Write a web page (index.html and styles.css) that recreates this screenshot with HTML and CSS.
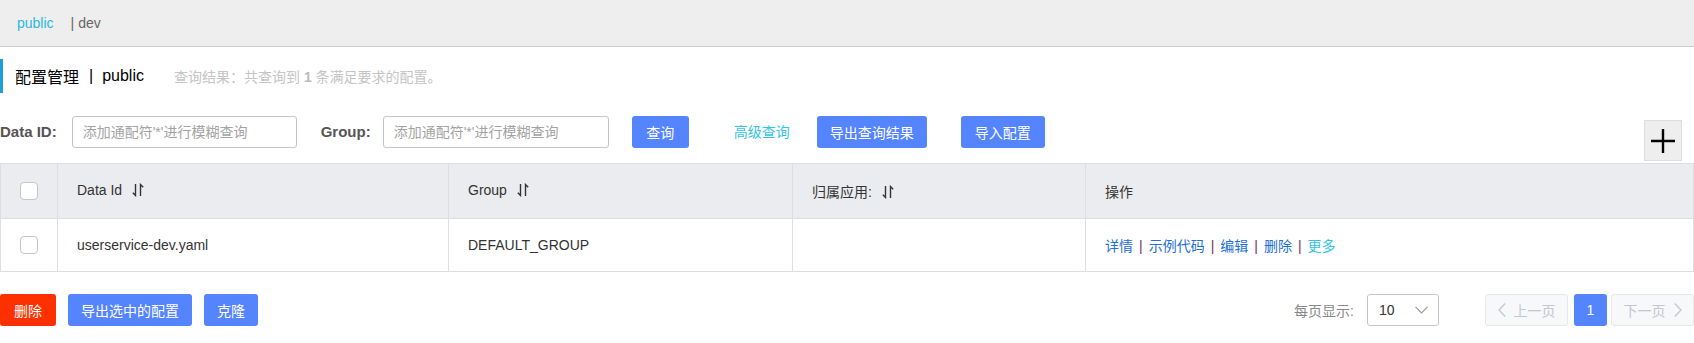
FILE: index.html
```html
<!DOCTYPE html>
<html lang="zh-CN">
<head>
    <meta charset="UTF-8">
    <title>配置管理</title>
    <link rel="stylesheet" href="styles.css">
</head>
<body>
    <div class="topbar">
        <span class="ns-active">public</span>
        <span class="ns-sep">|</span>
        <span class="ns">dev</span>
    </div>

    <div class="title">
        <span class="title-main">配置管理</span>
        <span class="title-sep">|</span>
        <span class="title-ns">public</span>
        <span class="summary">查询结果：共查询到 <b>1</b> 条满足要求的配置。</span>
    </div>

    <div class="toolbar">
        <label class="field-label">Data ID:</label>
        <input class="field-input" type="text" placeholder="添加通配符'*'进行模糊查询">
        <label class="field-label group-label">Group:</label>
        <input class="field-input group-input" type="text" placeholder="添加通配符'*'进行模糊查询">
        <button class="btn btn-primary btn-search">查询</button>
        <a class="adv-link">高级查询</a>
        <button class="btn btn-primary btn-export">导出查询结果</button>
        <button class="btn btn-primary">导入配置</button>
        <button class="add-btn">
            <svg width="24" height="24" viewBox="0 0 24 24"><path d="M0 12 H24 M12 0 V24" stroke="#000" stroke-width="2.4" fill="none"/></svg>
        </button>
    </div>

    <table class="grid">
        <colgroup>
            <col style="width:57px">
            <col style="width:391px">
            <col style="width:344px">
            <col style="width:293px">
            <col>
        </colgroup>
        <thead>
            <tr>
                <th class="check-cell"><span class="checkbox"></span></th>
                <th>Data Id <span class="sort"><svg width="12" height="14" viewBox="0 0 12 14"><path d="M3.5 1 V12.5 L0.8 9.8 M8.5 13 V1.5 L11.2 4.2" stroke="#333" stroke-width="1.4" fill="none"/></svg></span></th>
                <th>Group <span class="sort"><svg width="12" height="14" viewBox="0 0 12 14"><path d="M3.5 1 V12.5 L0.8 9.8 M8.5 13 V1.5 L11.2 4.2" stroke="#333" stroke-width="1.4" fill="none"/></svg></span></th>
                <th>归属应用: <span class="sort"><svg width="12" height="14" viewBox="0 0 12 14"><path d="M3.5 1 V12.5 L0.8 9.8 M8.5 13 V1.5 L11.2 4.2" stroke="#333" stroke-width="1.4" fill="none"/></svg></span></th>
                <th>操作</th>
            </tr>
        </thead>
        <tbody>
            <tr>
                <td class="check-cell"><span class="checkbox"></span></td>
                <td>userservice-dev.yaml</td>
                <td>DEFAULT_GROUP</td>
                <td></td>
                <td class="ops">
                    <a>详情</a><span class="op-sep">|</span><a>示例代码</a><span class="op-sep">|</span><a>编辑</a><span class="op-sep">|</span><a>删除</a><span class="op-sep">|</span><a class="more">更多</a>
                </td>
            </tr>
        </tbody>
    </table>

    <div class="footer">
        <div class="batch">
            <button class="btn btn-danger">删除</button>
            <button class="btn btn-primary">导出选中的配置</button>
            <button class="btn btn-primary">克隆</button>
        </div>
        <div class="pager">
            <span class="page-size-label">每页显示:</span>
            <div class="select">
                <span>10</span>
                <svg width="13" height="8" viewBox="0 0 13 8"><path d="M0.5 0.8 L6.5 7 L12.5 0.8" stroke="#999" stroke-width="1.2" fill="none"/></svg>
            </div>
            <button class="page-btn prev">
                <svg width="8" height="14" viewBox="0 0 8 14"><path d="M7.2 0.5 L1 7 L7.2 13.5" stroke="#c4c6cf" stroke-width="1.3" fill="none"/></svg>
                上一页
            </button>
            <button class="page-btn current">1</button>
            <button class="page-btn next">
                下一页
                <svg width="8" height="14" viewBox="0 0 8 14"><path d="M0.8 0.5 L7 7 L0.8 13.5" stroke="#c4c6cf" stroke-width="1.3" fill="none"/></svg>
            </button>
        </div>
    </div>
</body>
</html>
```

FILE: styles.css
```css
*{
    margin: 0;
    padding: 0;
    box-sizing: border-box;
}
html, body{
    background-color: #fff;
    font-family: "Liberation Sans", "Noto Sans CJK SC", sans-serif;
    font-size: 14px;
    color: #333;
}
.topbar{
    height: 47px;
    background-color: #eee;
    border-bottom: 1px solid #ccc;
    display: flex;
    align-items: center;
    padding-left: 17px;
    padding-bottom: 1px;
}
.ns-active{
    color: #2bb8dc;
}
.ns-sep{
    color: #666;
    margin-left: 17px;
    margin-right: 4px;
}
.ns{
    color: #666;
}
.title{
    margin-top: 12px;
    height: 34px;
    border-left: 3px solid #1a9fd6;
    padding-left: 12px;
    display: flex;
    align-items: center;
}
.title-main, .title-ns, .title-sep{
    font-size: 16px;
    color: #000;
}
.title-sep{
    margin: 0 9px 0 10px;
}
.summary{
    margin-left: 30px;
    font-size: 14px;
    color: #c5c5c5;
}
.summary b{
    color: #bbb;
}
.toolbar{
    display: flex;
    align-items: flex-start;
    padding-top: 23px;
}
.field-label{
    font-size: 15px;
    font-weight: bold;
    color: #555;
    line-height: 32px;
    margin-right: 15px;
}
.group-label{
    margin-right: 12px;
}
.field-input{
    width: 225px;
    height: 32px;
    border: 1px solid #c4c6cf;
    border-radius: 3px;
    padding: 0 10px;
    font-family: inherit;
    font-size: 14px;
    color: #333;
    margin-right: 24px;
    outline: none;
}
.field-input::placeholder{
    color: #a3a3a3;
}
.group-input{
    width: 226px;
    margin-right: 23px;
}
.btn{
    height: 32px;
    padding: 0 14px;
    border: 0;
    border-radius: 3px;
    font-family: inherit;
    font-size: 14px;
    color: #fff;
    cursor: pointer;
}
.btn-primary{
    background-color: #5584ff;
}
.btn-danger{
    background-color: #ff3000;
}
.btn-search{
    width: 57px;
    padding: 0;
    margin-right: 45px;
}
.adv-link{
    color: #33c4e2;
    line-height: 32px;
    margin-right: 27px;
    cursor: pointer;
}
.btn-export{
    width: 110px;
    padding: 0;
    margin-right: 34px;
}
.add-btn{
    margin-left: auto;
    margin-right: 12px;
    margin-top: 4px;
    width: 38px;
    height: 41px;
    background-color: #eee;
    border: 1px solid #ddd;
    display: flex;
    align-items: center;
    justify-content: center;
}
.grid{
    margin-top: 2px;
    width: 100%;
    border-collapse: collapse;
    table-layout: fixed;
    border: 1px solid #dcdee3;
}
.grid th, .grid td{
    border: 1px solid #dcdee3;
    text-align: left;
    padding: 0 19px;
    color: #333;
    font-weight: normal;
    white-space: nowrap;
}
.grid th{
    height: 55px;
    background-color: #ebecf0;
}
.grid td{
    height: 53px;
}
.grid .check-cell{
    padding: 0;
    text-align: center;
}
.checkbox{
    display: inline-block;
    width: 18px;
    height: 18px;
    border: 1px solid #c4c6cf;
    border-radius: 4px;
    background-color: #fff;
    vertical-align: middle;
}
.sort{
    display: inline-block;
    margin-left: 6px;
    vertical-align: -2px;
}
.ops a{
    color: #1f6fd6;
    cursor: pointer;
}
.ops .more{
    color: #33c4e2;
}
.op-sep{
    color: #713262;
    margin: 0 6px;
}
.footer{
    margin-top: 22px;
    display: flex;
    justify-content: space-between;
    align-items: center;
}
.batch{
    display: flex;
    gap: 12px;
}
.batch .btn{
    padding: 0 13px;
}
.batch .btn:first-child{
    width: 56px;
    padding: 0;
}
.pager{
    display: flex;
    align-items: center;
}
.page-size-label{
    color: #888;
    margin-right: 13px;
}
.select{
    width: 72px;
    height: 32px;
    border: 1px solid #c4c6cf;
    border-radius: 3px;
    display: flex;
    align-items: center;
    justify-content: space-between;
    padding: 0 10px 0 11px;
    color: #333;
    margin-right: 46px;
}
.page-btn{
    height: 32px;
    border-radius: 3px;
    font-family: inherit;
    font-size: 14px;
    display: flex;
    align-items: center;
    justify-content: center;
    gap: 8px;
}
.prev, .next{
    width: 83px;
    background-color: #f7f8fa;
    border: 1px solid #e6e7eb;
    color: #c4c6cf;
}
.current{
    width: 33px;
    margin: 0 4px 0 6px;
    background-color: #5584ff;
    border: 0;
    color: #fff;
}
```
